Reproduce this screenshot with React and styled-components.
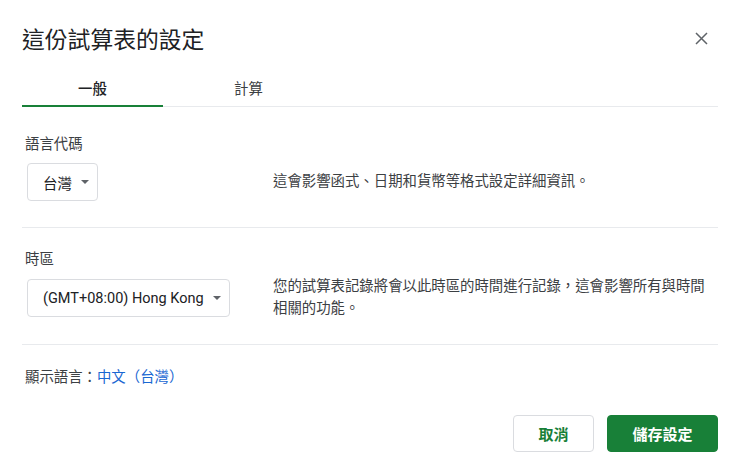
import React, { useState } from "react";
import styled, { createGlobalStyle } from "styled-components";

const GlobalStyle = createGlobalStyle`
  body {
    margin: 0;
    background: #ffffff;
    font-family: Roboto, "Noto Sans CJK TC", "Noto Sans", sans-serif;
    color: #3c4043;
  }
`;

const Dialog = styled.div`
  width: 740px;
  height: 475px;
  box-sizing: border-box;
  padding: 22px 22px 0 22px;
  display: flex;
  flex-direction: column;
`;

const Header = styled.div`
  height: 32px;
  display: flex;
  align-items: center;
  justify-content: space-between;
`;

const Title = styled.h1`
  margin: 0;
  font-size: 22.8px;
  font-weight: 400;
  color: #202124;
`;

const CloseButton = styled.button`
  border: none;
  background: none;
  padding: 0;
  width: 24px;
  height: 24px;
  margin-right: 5px;
  display: flex;
  align-items: center;
  justify-content: center;
  cursor: pointer;
`;

const TabBar = styled.div`
  margin-top: 12px;
  display: flex;
  gap: 15px;
  border-bottom: 1px solid #e8eaed;
  margin-bottom: 6px;
`;

const Tab = styled.div`
  width: 141px;
  box-sizing: border-box;
  text-align: center;
  font-size: 14.4px;
  line-height: 20px;
  padding: 14px 0 5px;
  color: ${({ $active }) => ($active ? "#202124" : "#3c4043")};
  font-weight: ${({ $active }) => ($active ? 500 : 400)};
  border-bottom: 2px solid ${({ $active }) => ($active ? "#188038" : "transparent")};
  margin-bottom: -1px;
  cursor: pointer;
`;

const Section = styled.div`
  padding: ${({ $top }) => $top}px 0 ${({ $bottom }) => $bottom}px 3px;
  border-bottom: 1px solid #e8eaed;
`;

const Label = styled.div`
  font-size: 14.4px;
  line-height: 20px;
  color: #3c4043;
`;

const Row = styled.div`
  margin-top: ${({ $mt }) => $mt}px;
  display: grid;
  grid-template-columns: 248px 1fr;
  align-items: center;
`;

const Select = styled.div`
  justify-self: start;
  margin-left: 2px;
  height: 38px;
  box-sizing: border-box;
  border: 1px solid #dadce0;
  border-radius: 4px;
  padding: 0 8px 0 15px;
  display: flex;
  align-items: center;
  gap: 9px;
  font-size: 14.5px;
  color: #202124;
`;

const Arrow = styled.span`
  width: 0;
  height: 0;
  border-left: 4px solid transparent;
  border-right: 4px solid transparent;
  border-top: 4px solid #5f6368;
`;

const Description = styled.div`
  font-size: 14.4px;
  line-height: 22px;
  color: #3c4043;
  max-width: 440px;
`;

const DisplayLang = styled.div`
  padding: 23px 0 0 3px;
  font-size: 14.4px;
  line-height: 20px;
  color: #3c4043;
`;

const Link = styled.a`
  color: #1967d2;
  text-decoration: none;
  cursor: pointer;
`;

const Footer = styled.div`
  margin-top: 27px;
  display: flex;
  justify-content: flex-end;
  gap: 13px;
`;

const Button = styled.button`
  height: 37px;
  box-sizing: border-box;
  border-radius: 4px;
  font-family: inherit;
  font-size: 15px;
  font-weight: 700;
  cursor: pointer;
  width: ${({ $w }) => $w}px;
  border: 1px solid ${({ $primary }) => ($primary ? "#188038" : "#dadce0")};
  background: ${({ $primary }) => ($primary ? "#188038" : "#ffffff")};
  color: ${({ $primary }) => ($primary ? "#ffffff" : "#188038")};
`;

export default function App() {
  const [tab, setTab] = useState(0);
  return (
    <>
      <GlobalStyle />
      <Dialog>
        <Header>
          <Title>這份試算表的設定</Title>
          <CloseButton aria-label="關閉">
            <svg width="13" height="13" viewBox="0 0 13 13">
              <path d="M1 1 L12 12 M12 1 L1 12" stroke="#5f6368" strokeWidth="1.5" />
            </svg>
          </CloseButton>
        </Header>
        <TabBar>
          <Tab $active={tab === 0} onClick={() => setTab(0)}>一般</Tab>
          <Tab $active={tab === 1} onClick={() => setTab(1)}>計算</Tab>
        </TabBar>
        <Section $top={22} $bottom={26}>
          <Label>語言代碼</Label>
          <Row $mt={8}>
            <Select>
              台灣
              <Arrow />
            </Select>
            <Description>這會影響函式、日期和貨幣等格式設定詳細資訊。</Description>
          </Row>
        </Section>
        <Section $top={22} $bottom={24}>
          <Label>時區</Label>
          <Row $mt={6}>
            <Select>
              (GMT+08:00) Hong Kong
              <Arrow />
            </Select>
            <Description>
              您的試算表記錄將會以此時區的時間進行記錄，這會影響所有與時間相關的功能。
            </Description>
          </Row>
        </Section>
        <DisplayLang>
          顯示語言：<Link>中文（台灣）</Link>
        </DisplayLang>
        <Footer>
          <Button $w={81}>取消</Button>
          <Button $w={111} $primary>儲存設定</Button>
        </Footer>
      </Dialog>
    </>
  );
}
